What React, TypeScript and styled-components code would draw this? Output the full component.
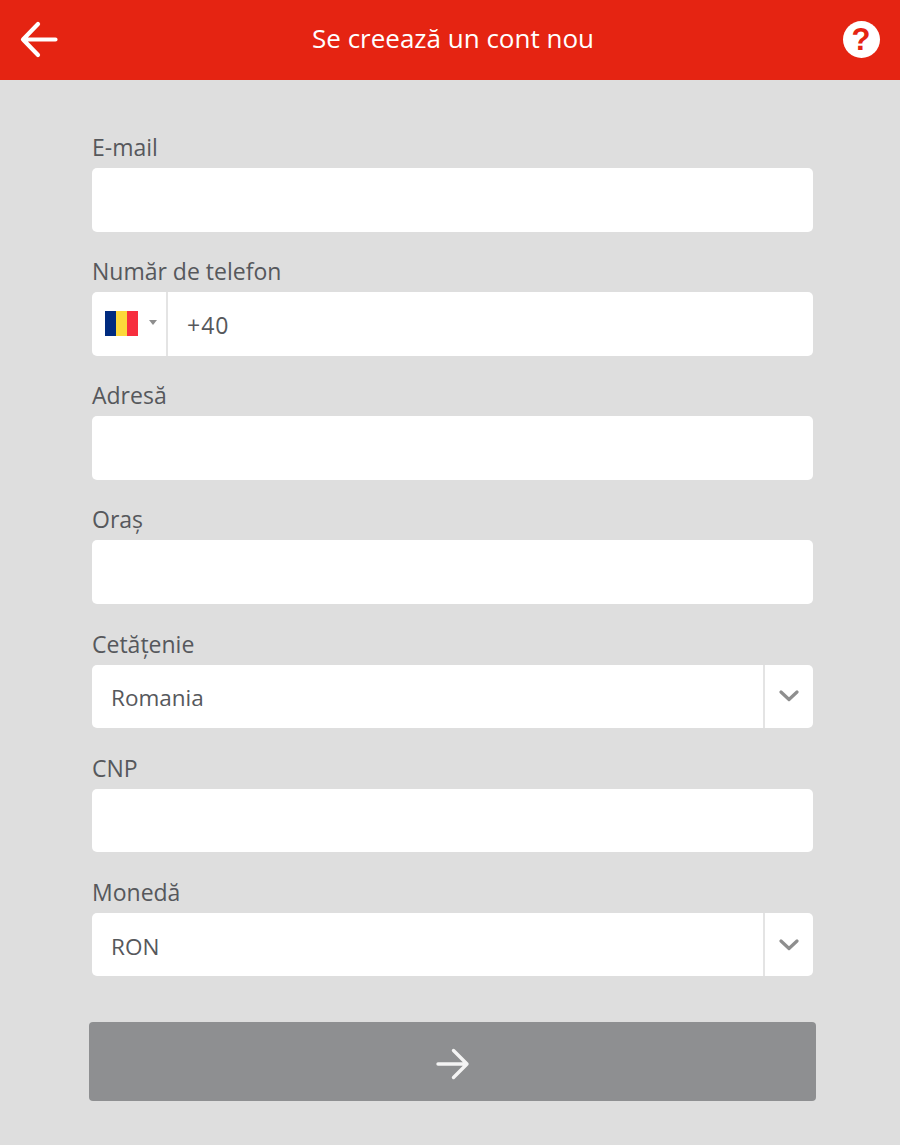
import styled, { createGlobalStyle } from 'styled-components';

const GlobalStyle = createGlobalStyle`
	html, body {
		margin: 0;
		padding: 0;
		background: #dedede;
		font-family: 'Open Sans', 'Liberation Sans', sans-serif;
	}
`;

function Chevron() {
	return (
		<svg width="20" height="12" viewBox="0 0 20 12" fill="none">
			<path d="M2 2l8 7.500L18 2" stroke="#8e8e8e" strokeWidth="3.200" strokeLinecap="round" strokeLinejoin="round" />
		</svg>
	);
}

function Field({ label, children }: { label: string; children?: React.ReactNode }) {
	return (
		<FieldWrapper>
			<Label>{label}</Label>
			<InputBox>{children}</InputBox>
		</FieldWrapper>
	);
}

function SelectValue({ value }: { value: string }) {
	return (
		<>
			<BoxText>{value}</BoxText>
			<SelectArrow>
				<Chevron />
			</SelectArrow>
		</>
	);
}

export default function App() {
	return (
		<Page>
			<GlobalStyle />
			<Header>
				<IconSlot>
					<svg width="40" height="40" viewBox="0 0 40 40" fill="none">
						<path
							d="M36.500 19.500H4M19 4L4 19.500 19 35"
							stroke="#fff"
							strokeWidth="4.200"
							strokeLinecap="round"
							strokeLinejoin="round"
						/>
					</svg>
				</IconSlot>
				<Title>Se creează un cont nou</Title>
				<IconSlot>
					<HelpIcon>?</HelpIcon>
				</IconSlot>
			</Header>
			<Form>
				<Field label="E-mail" />
				<Field label="Număr de telefon">
					<FlagPicker>
						<Flag>
							<FlagStripe color="#002b7f" />
							<FlagStripe color="#fcd83a" />
							<FlagStripe color="#f72e3e" />
						</Flag>
						<Caret />
					</FlagPicker>
					<PhoneText>+40</PhoneText>
				</Field>
				<Field label="Adresă" />
				<Field label="Oraș" />
				<Field label="Cetățenie">
					<SelectValue value="Romania" />
				</Field>
				<Field label="CNP" />
				<Field label="Monedă">
					<SelectValue value="RON" />
				</Field>
				<SubmitButton type="button" aria-label="Next">
					<svg width="34" height="32" viewBox="0 0 34 32" fill="none">
						<path
							d="M2 16h29M17.500 2.500L31 16 17.500 29.500"
							stroke="#f4f4f4"
							strokeWidth="3.400"
							strokeLinecap="round"
							strokeLinejoin="round"
						/>
					</svg>
				</SubmitButton>
			</Form>
		</Page>
	);
}

const Page = styled.div`
	width: 900px;
	height: 1145px;
	background-color: #dedede;
	overflow: hidden;
`;

const Header = styled.header`
	height: 80px;
	padding: 0 19px 1px;
	box-sizing: border-box;

	display: flex;
	justify-content: space-between;
	align-items: center;

	background-color: #e52412;
`;

const IconSlot = styled.div`
	width: 40px;
	height: 40px;

	display: flex;
	justify-content: center;
	align-items: center;
`;

const Title = styled.h1`
	margin: 0 0 3px 6px;
	color: #ffffff;
	font-size: 26px;
	font-weight: 400;
`;

const HelpIcon = styled.div`
	width: 37px;
	height: 37px;
	border-radius: 50%;

	display: flex;
	justify-content: center;
	align-items: center;

	background-color: #ffffff;
	color: #e52412;
	font-family: 'Liberation Sans', sans-serif;
	font-size: 31px;
	font-weight: 700;
	line-height: 1;
`;

const Form = styled.main`
	padding: 52px 84px 0 89px;
	box-sizing: border-box;

	display: flex;
	flex-direction: column;
	align-items: stretch;
`;

const FieldWrapper = styled.div`
	height: 124.170px;
	padding: 0 3px;
	box-sizing: border-box;

	display: flex;
	flex-direction: column;
`;

const Label = styled.label`
	height: 36px;
	color: #56585c;
	font-size: 23px;
	line-height: 30px;
`;

const InputBox = styled.div`
	height: 63.500px;
	border-radius: 5px;

	display: flex;
	align-items: center;

	background-color: #ffffff;
`;

const BoxText = styled.span`
	flex: 1;
	padding: 3px 0 0 19px;
	color: #56585c;
	font-size: 22.500px;
`;

const SelectArrow = styled.div`
	width: 48px;
	height: 100%;
	border-left: 2px solid #e4e4e4;

	display: flex;
	justify-content: center;
	align-items: center;
`;

const FlagPicker = styled.div`
	width: 76px;
	height: 100%;
	padding-left: 13px;
	box-sizing: border-box;
	border-right: 2px solid #e4e4e4;

	display: flex;
	align-items: center;
	gap: 11px;
`;

const Flag = styled.div`
	width: 33px;
	height: 25px;
	display: flex;
`;

const FlagStripe = styled.span<{ color: string }>`
	flex: 1;
	background-color: ${(props) => props.color};
`;

const Caret = styled.span`
	width: 0;
	height: 0;
	margin-bottom: 2px;
	border-left: 4px solid transparent;
	border-right: 4px solid transparent;
	border-top: 5px solid #8e8e8e;
`;

const PhoneText = styled.span`
	padding: 2px 0 0 19px;
	color: #56585c;
	font-size: 23px;
	letter-spacing: 1px;
`;

const SubmitButton = styled.button`
	height: 79px;
	margin-top: 21px;
	padding: 5px 0 0;
	border: none;
	border-radius: 4px;

	display: flex;
	justify-content: center;
	align-items: center;

	background-color: #8e8f91;
`;
